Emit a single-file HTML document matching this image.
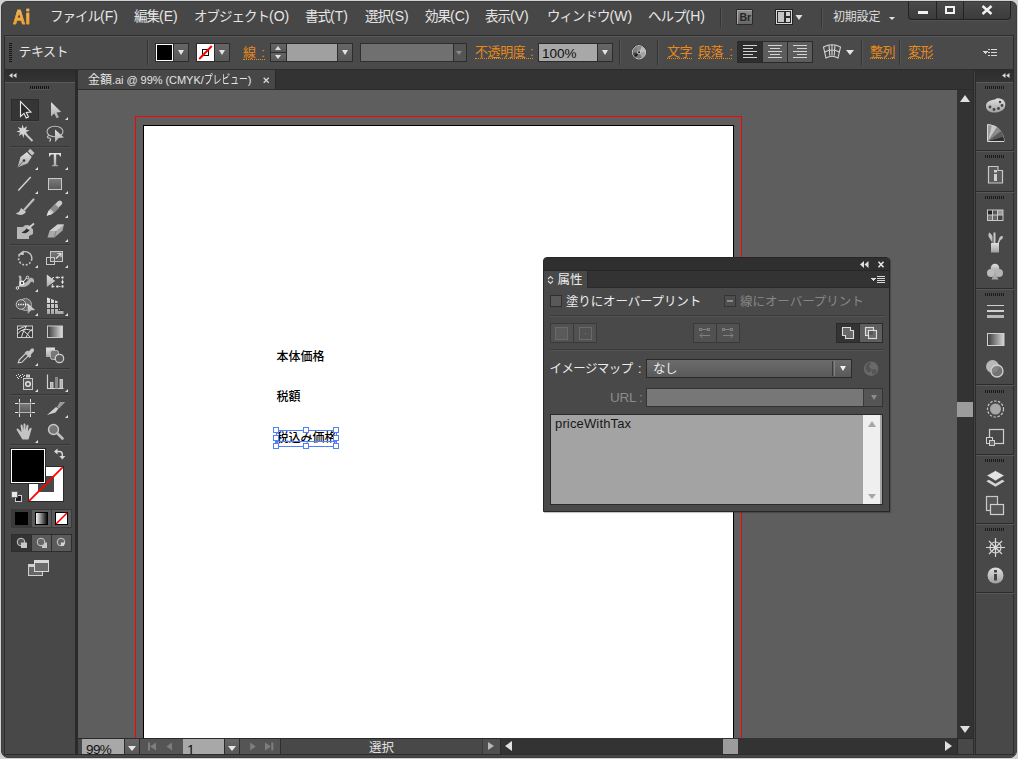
<!DOCTYPE html>
<html lang="ja"><head><meta charset="utf-8"><title>金額.ai</title>
<style>
html,body{margin:0;padding:0;background:#d2d2d2}
body{width:1018px;height:759px;overflow:hidden;background:#d2d2d2;position:relative;
 font-family:"Liberation Sans","Noto Sans CJK JP",sans-serif;font-size:13px;color:#e8e8e8;line-height:1}
.a{position:absolute;box-sizing:border-box}
.t{position:absolute;white-space:nowrap;line-height:16px}
#win{left:1px;top:1px;width:1016px;height:757px;background:#474747;border:1px solid #3e3e3e;border-radius:6px 6px 7px 7px}
.menu{top:7.5px;font-size:13.5px;color:#e6e6e6;letter-spacing:-1px}
.menu .l{font-size:14px;letter-spacing:0}
.or{color:#e8891c;border-bottom:1px dotted #e8891c;line-height:13px;font-size:13px !important;top:45px !important}
.sep{position:absolute;width:1px;background:#333;box-shadow:1px 0 0 #555}
.btn{position:absolute;box-sizing:border-box;background:linear-gradient(#666,#585858);border:1px solid #2c2c2c}
.tri{position:absolute;width:0;height:0;border-left:3.5px solid transparent;border-right:3.5px solid transparent;border-top:5px solid #e4e4e4}
.grip{position:absolute;height:3px;background:repeating-linear-gradient(90deg,#141414 0 1px,transparent 1px 2px);border-bottom:1px solid #555}
.dock{position:absolute;left:977px;width:37px;background:#484848;border-top:1px solid #2c2c2c}
</style></head><body>
<div id="win" class="a"></div>

<!-- ===== MENU BAR ===== -->
<div id="menubar">
<div class="t" style="left:12.800px;top:6px;font-size:21px;font-weight:bold;line-height:22px;color:#f0a232;letter-spacing:.6px;transform:scaleX(.8);transform-origin:0 0;background:linear-gradient(#f2bc66 20%,#f0981c 90%);-webkit-background-clip:text;background-clip:text;-webkit-text-fill-color:transparent;-webkit-text-stroke:.6px #eda73d">Ai</div>
<div class="t menu" style="left:50px">ファイル<span class="l">(F)</span></div>
<div class="t menu" style="left:134px">編集<span class="l">(E)</span></div>
<div class="t menu" style="left:194px">オブジェクト<span class="l">(O)</span></div>
<div class="t menu" style="left:305px">書式<span class="l">(T)</span></div>
<div class="t menu" style="left:365px">選択<span class="l">(S)</span></div>
<div class="t menu" style="left:425px">効果<span class="l">(C)</span></div>
<div class="t menu" style="left:485px">表示<span class="l">(V)</span></div>
<div class="t menu" style="left:547px">ウィンドウ<span class="l">(W)</span></div>
<div class="t menu" style="left:648px">ヘルプ<span class="l">(H)</span></div>
<div class="sep" style="left:720px;top:8px;height:19px"></div>
<div class="a" style="left:736px;top:9px;width:17px;height:16px;background:linear-gradient(#8e8e8e,#666);border:1px solid #2a2a2a;border-radius:1px;box-shadow:inset 1px 1px 0 #a8a8a8"></div>
<div class="t" style="left:739.500px;top:10.500px;font-size:10.500px;line-height:13px;font-weight:bold;color:#262626;letter-spacing:-0.2px">Br</div>
<svg class="a" style="left:774px;top:8px" width="30" height="18" viewBox="0 0 30 18"><rect x="1" y="1" width="18" height="16" fill="#222"/><rect x="2" y="2" width="16" height="14" fill="#d8d8d8"/><rect x="3.500" y="3.500" width="7" height="11" fill="#c4c4c4" stroke="#2a2a2a"/><rect x="11.500" y="3.500" width="5" height="5" fill="#d0d0d0" stroke="#2a2a2a"/><rect x="11.500" y="9.500" width="5" height="5" fill="#d0d0d0" stroke="#2a2a2a"/><path d="M21.500 7h7l-3.500 5z" fill="#e0e0e0"/></svg>
<div class="sep" style="left:821px;top:8px;height:19px"></div>
<div class="t menu" style="left:833px;top:8.500px;font-size:12px;letter-spacing:-0.2px;color:#dedede">初期設定</div>
<div class="tri" style="left:889px;top:17px;border-left-width:3px;border-right-width:3px;border-top-width:3px"></div>
<!-- window buttons -->
<div class="a" style="left:908px;top:1px;width:103px;height:19px;background:linear-gradient(#4a4a4a,#3b3b3b);border:1px solid #222;border-top-color:#3a3a3a;border-radius:0 0 4px 4px;box-shadow:0 1px 0 #525252"></div>
<div class="a" style="left:936px;top:1px;width:1px;height:18px;background:#222"></div>
<div class="a" style="left:963px;top:1px;width:1px;height:18px;background:#222"></div>
<div class="a" style="left:918px;top:11px;width:10px;height:3px;background:#f2f2f2"></div>
<div class="a" style="left:945px;top:6px;width:10px;height:8px;border:2px solid #f2f2f2"></div>
<svg class="a" style="left:981px;top:5px" width="12" height="10" viewBox="0 0 12 10"><path d="M1.500 1l9 8M10.500 1l-9 8" stroke="#f2f2f2" stroke-width="2.400" fill="none"/></svg>
</div>

<!-- ===== CONTROL BAR ===== -->
<div id="ctrl" class="a" style="left:4px;top:35px;width:1010px;height:35px;background:#4a4a4a;border:1px solid #2c2c2c;box-shadow:inset 0 1px 0 #5a5a5a"></div>
<div class="a" style="left:9px;top:43px;width:3px;height:20px;background:repeating-linear-gradient(180deg,#141414 0 1px,transparent 1px 2px)"></div>
<div class="t" style="left:18.500px;top:43.500px;font-size:13px;letter-spacing:-0.5px;color:#e6e6e6">テキスト</div>
<div class="sep" style="left:147px;top:40px;height:25px"></div>
<!-- fill -->
<div class="a" style="left:155px;top:43px;width:19px;height:19px;background:#000;border:1px solid #2a2a2a;box-shadow:inset 0 0 0 1px #fff"></div>
<div class="btn" style="left:173px;top:43px;width:16px;height:19px"></div><div class="tri" style="left:177.500px;top:50px"></div>
<!-- stroke -->
<div class="a" style="left:196px;top:43px;width:19px;height:19px;background:#fff;border:1px solid #2a2a2a"></div>
<svg class="a" style="left:197px;top:44px" width="17" height="17" viewBox="0 0 17 17"><rect x="5.500" y="5.500" width="6" height="6" fill="none" stroke="#111" stroke-width="1"/><path d="M2.200 15L14.800 2" stroke="#f00" stroke-width="2"/></svg>
<div class="btn" style="left:214px;top:43px;width:16px;height:19px"></div><div class="tri" style="left:218.500px;top:50px"></div>
<div class="t or" style="left:243px;top:46px !important;font-size:12.5px">線<span style="margin-left:1.500px"> :</span></div>
<!-- spinner + field -->
<div class="btn" style="left:270px;top:43px;width:17px;height:10px"></div>
<div class="btn" style="left:270px;top:52px;width:17px;height:10px"></div>
<div class="tri" style="left:275px;top:46px;border-top:none;border-bottom:4px solid #dcdcdc;border-left-width:3.500px;border-right-width:3.500px"></div>
<div class="tri" style="left:275px;top:55px;border-top-width:4px;border-left-width:3.500px;border-right-width:3.500px"></div>
<div class="a" style="left:286px;top:43px;width:52px;height:19px;background:#a0a0a0;border:1px solid #2a2a2a"></div>
<div class="btn" style="left:337px;top:43px;width:16px;height:19px"></div><div class="tri" style="left:341.500px;top:50px"></div>
<div class="a" style="left:360px;top:43px;width:94px;height:19px;background:#707070;border:1px solid #2f2f2f"></div>
<div class="btn" style="left:453px;top:43px;width:14px;height:19px;background:#555"></div><div class="tri" style="left:456px;top:51px;border-top-color:#8a8a8a;border-left-width:3.500px;border-right-width:3.500px;border-top-width:4px"></div>
<div class="t or" style="left:475px;top:44px;font-size:12.5px;letter-spacing:-0.4px">不透明度<span style="margin-left:1.500px"> :</span></div>
<div class="a" style="left:538px;top:43px;width:60px;height:19px;background:#a8a8a8;border:1px solid #2a2a2a"></div>
<div class="t" style="left:542px;top:46px;font-size:13.5px;color:#111">100%</div>
<div class="btn" style="left:597px;top:43px;width:16px;height:19px"></div><div class="tri" style="left:601.500px;top:50px"></div>
<div class="sep" style="left:619px;top:40px;height:25px"></div>
<svg class="a" style="left:631px;top:44px" width="16" height="16" viewBox="0 0 16 16"><circle cx="8" cy="8" r="7.300" fill="#2a2a2a"/><circle cx="8" cy="8.300" r="6.600" fill="#9c9c9c" stroke="#d4d4d4" stroke-width="1"/><path d="M8 8.300L5 2.800A6.200 6.200 0 0 1 11 2.800z" fill="#8a8a8a"/><path d="M8 8.300L11 2.800A6.200 6.200 0 0 1 14.200 8.300z" fill="#bdbdbd"/><path d="M8 8.300L14.200 8.300A6.200 6.200 0 0 1 11 13.800z" fill="#a4a4a4"/><path d="M8 8.300L11 13.800A6.200 6.200 0 0 1 5 13.800z" fill="#787878"/><path d="M8 8.300L5 13.800A6.200 6.200 0 0 1 1.800 8.300z" fill="#4a4a4a"/><path d="M8 8.300L1.800 8.300A6.200 6.200 0 0 1 5 2.800z" fill="#7e7e7e"/><path d="M3.500 11.300l2.500-1.800 1 1.300-2.300 2z" fill="#151515"/><circle cx="8" cy="8.300" r="1.900" fill="#c8c8c8"/><circle cx="8" cy="8.300" r="1" fill="#111"/></svg>
<div class="sep" style="left:657px;top:40px;height:25px"></div>
<div class="t or" style="left:667px;top:44px;font-size:12.5px;letter-spacing:-0.5px">文字</div>
<div class="t or" style="left:698px;top:44px;font-size:12.5px;letter-spacing:-0.5px">段落<span style="margin-left:3px"> :</span></div>
<!-- align buttons -->
<div class="a" style="left:737px;top:41px;width:76px;height:22px;background:#5c5c5c;border:1px solid #2a2a2a"></div>
<div class="a" style="left:738px;top:42px;width:24px;height:20px;background:#2e2e2e"></div>
<div class="a" style="left:762px;top:42px;width:1px;height:20px;background:#2a2a2a"></div>
<div class="a" style="left:787px;top:42px;width:1px;height:20px;background:#2a2a2a"></div>
<svg class="a" style="left:738px;top:42px" width="74" height="20" viewBox="0 0 74 20" stroke="#d4d4d4" stroke-width="1" shape-rendering="crispEdges"><path d="M5 3.500h14M5 6.500h10M5 9.500h14M5 12.500h10M5 15.500h14"/><path d="M30 3.500h14M32 6.500h10M30 9.500h14M32 12.500h10M30 15.500h14"/><path d="M55 3.500h14M59 6.500h10M55 9.500h14M59 12.500h10M55 15.500h14"/></svg>
<!-- warp icon -->
<svg class="a" style="left:822px;top:43px" width="20" height="17" viewBox="0 0 20 17" fill="none" stroke="#d4d4d4" stroke-width="1.100"><path d="M1.500 4Q10 -.5 18.500 4L16 15Q10 11.500 4 15Z"/><path d="M7 2L7.800 12.800M13 2L12.200 12.800M10 1.700v10.800M2.600 9Q10 5 17.400 9"/></svg>
<div class="tri" style="left:846px;top:50px;border-top-color:#e6e6e6;border-left-width:4px;border-right-width:4px;border-top-width:5px"></div>
<div class="sep" style="left:861px;top:40px;height:25px"></div>
<div class="t or" style="left:870px;top:44px;font-size:12.5px;letter-spacing:-0.5px">整列</div>
<div class="sep" style="left:899px;top:40px;height:25px"></div>
<div class="t or" style="left:908px;top:44px;font-size:12.5px;letter-spacing:-0.5px">変形</div>
<svg class="a" style="left:982px;top:48px" width="16" height="9" viewBox="0 0 16 9" shape-rendering="crispEdges"><path d="M0 3h6l-3 3z" fill="#d8d8d8"/><path d="M6 1h2v1h-2zM6 4h2v1h-2zM6 7h2v1h-2zM9 1h6v1h-6zM9 4h6v1h-6zM9 7h6v1h-6z" fill="#d8d8d8"/></svg>

<!-- ===== TAB BAR ===== -->
<div id="tabbar" class="a" style="left:77px;top:70px;width:899px;height:20px;background:#333;border-left:1px solid #2a2a2a;border-bottom:1px solid #2c2c2c"></div>
<div class="a" style="left:78px;top:70px;width:198px;height:19px;background:#474747;border-right:1px solid #2a2a2a"></div>
<div class="t" style="left:88px;top:72px;font-size:12px;color:#e4e4e4"><span>金額</span><span style="font-size:11px;letter-spacing:-0.05px">.ai @ 99% (CMYK/</span><span style="display:inline-block;transform:scaleX(.73);transform-origin:0 50%;margin-right:-16px">プレビュー</span><span style="font-size:11px">)</span></div>
<svg class="a" style="left:263px;top:77px" width="7" height="7" viewBox="0 0 7 7"><path d="M.7.700l5 5M5.700.7l-5 5" stroke="#d8d8d8" stroke-width="1.300"/></svg>

<!-- ===== CANVAS ===== -->
<div id="canvas" class="a" style="left:78px;top:90px;width:879px;height:648px;background:#5e5e5e;overflow:hidden">
 <div class="a" style="left:57px;top:26px;width:607px;height:700px;border:1px solid #f00"></div>
 <div class="a" style="left:65px;top:35px;width:591px;height:700px;background:#fff;border:1px solid #000"></div>
 <div class="t" style="left:198.500px;top:259px;font-size:12px;line-height:16px;color:#000;font-weight:500;letter-spacing:0">本体価格</div>
 <div class="t" style="left:198.500px;top:299px;font-size:12px;line-height:16px;color:#000;font-weight:500;letter-spacing:0">税額</div>
 <div class="t" style="left:198.500px;top:340px;font-size:12px;line-height:16px;color:#000;font-weight:500;letter-spacing:0">税込み価格</div>
</div>
<svg class="a" style="left:0;top:0;pointer-events:none" width="1018" height="759" viewBox="0 0 1018 759"><rect x="276.500" y="430.500" width="60" height="16" fill="none" stroke="#4f80ff"/><path d="M276 441.500h60" stroke="#4f80ff"/><rect x="275" y="441" width="3" height="3" fill="#4f80ff"/><rect x="273.5" y="427.5" width="5" height="5" fill="#fff" stroke="#4f80ff"/><rect x="273.5" y="435.5" width="5" height="5" fill="#fff" stroke="#4f80ff"/><rect x="273.5" y="443.5" width="5" height="5" fill="#fff" stroke="#4f80ff"/><rect x="303.5" y="427.5" width="5" height="5" fill="#fff" stroke="#4f80ff"/><rect x="303.5" y="443.5" width="5" height="5" fill="#fff" stroke="#4f80ff"/><rect x="333.5" y="427.5" width="5" height="5" fill="#fff" stroke="#4f80ff"/><rect x="333.5" y="435.5" width="5" height="5" fill="#fff" stroke="#4f80ff"/><rect x="333.5" y="443.5" width="5" height="5" fill="#fff" stroke="#4f80ff"/></svg>

<!-- ===== SCROLLBARS / STATUS ===== -->
<div id="vscroll" class="a" style="left:957px;top:90px;width:16px;height:648px;background:#333"></div>
<div class="tri" style="left:960px;top:95px;border-left-width:5px;border-right-width:5px;border-top:none;border-bottom:7px solid #e0e0e0"></div>
<div class="tri" style="left:960px;top:726px;border-left-width:5px;border-right-width:5px;border-top:7px solid #e0e0e0"></div>
<div class="a" style="left:957px;top:402px;width:16px;height:15px;background:#9c9c9c"></div>
<div class="a" style="left:973px;top:70px;width:3px;height:685px;background:#2c2c2c"></div>
<div class="a" style="left:974px;top:71px;width:1px;height:683px;background:#424242"></div>
<div class="a" style="left:78px;top:754px;width:896px;height:1px;background:#2c2c2c;z-index:3"></div>
<div id="status" class="a" style="left:78px;top:738px;width:895px;height:17px;background:#484848;border-top:1px solid #2a2a2a"></div>
<div class="a" style="left:82px;top:739px;width:42px;height:16px;background:#a8a8a8;overflow:hidden"><div class="t" style="left:4px;top:3px;font-size:13.500px;color:#111;letter-spacing:-0.6px">99%</div></div>
<div class="btn" style="left:124px;top:738px;width:16px;height:17px;border-bottom:none"></div><div class="tri" style="left:128px;top:746px;border-top-color:#e6e6e6;border-left-width:4px;border-right-width:4px;border-top-width:5px"></div>
<div class="a" style="left:140px;top:739px;width:141px;height:16px;background:#555;border-right:1px solid #2e2e2e"></div>
<svg class="a" style="left:146px;top:741px" width="130" height="12" viewBox="0 0 130 12" fill="#7e7e7e"><rect x="2" y="1.500" width="2" height="8"/><path d="M10 1.500v8l-6-4z"/><path d="M26 1.500v8l-5.500-4z"/><path d="M104.200 1.500v8l5.500-4z"/><path d="M119 1.500v8l6-4z"/><rect x="125.300" y="1.500" width="2" height="8"/></svg>
<div class="a" style="left:183px;top:739px;width:41px;height:16px;background:#a8a8a8;overflow:hidden"><div class="t" style="left:4px;top:3px;font-size:14px;color:#111">1</div></div>
<div class="btn" style="left:224px;top:738px;width:16px;height:17px;border-bottom:none"></div><div class="tri" style="left:228px;top:746px;border-top-color:#e6e6e6;border-left-width:4px;border-right-width:4px;border-top-width:5px"></div>
<div class="a" style="left:482px;top:739px;width:18px;height:15px;background:#4f4f4f;border-left:1px solid #3a3a3a"></div>
<div class="t" style="left:369px;top:740px;font-size:12.5px;color:#e0e0e0">選択</div>
<div class="tri" style="left:488px;top:742px;border:none;border-top:4.500px solid transparent;border-bottom:4.500px solid transparent;border-left:6px solid #b8b8b8"></div>
<div class="a" style="left:500px;top:738px;width:457px;height:17px;background:#333;border-left:1px solid #2a2a2a"></div>
<div class="tri" style="left:505px;top:741px;border:none;border-top:5px solid transparent;border-bottom:5px solid transparent;border-right:7px solid #e0e0e0"></div>
<div class="tri" style="left:945px;top:741px;border:none;border-top:5px solid transparent;border-bottom:5px solid transparent;border-left:7px solid #e0e0e0"></div>
<div class="a" style="left:723px;top:739px;width:15px;height:16px;background:#9c9c9c"></div>
<div class="a" style="left:957px;top:738px;width:16px;height:17px;background:#484848;border-left:1px solid #2a2a2a;border-top:1px solid #2a2a2a"></div>

<!-- ===== LEFT TOOLBAR ===== -->
<div id="tools" class="a" style="left:4px;top:70px;width:74px;height:685px;background:#484848;border:1px solid #2c2c2c;border-right-width:3px;border-right-color:#2a2a2a"></div>
<div class="a" style="left:5px;top:70px;width:70px;height:12px;background:linear-gradient(#2c2c2c,#343434)"></div>
<div class="a" style="left:5px;top:82px;width:70px;height:1px;background:#5a5a5a"></div>
<svg class="a" style="left:9px;top:73px" width="8" height="5" viewBox="0 0 8 5"><path d="M3.500 0v5L0 2.500zM7.500 0v5L4 2.500z" fill="#d8d8d8"/></svg>
<div class="grip" style="left:30px;top:86px;width:20px"></div>
<svg class="a" style="left:0;top:0" width="80" height="759" viewBox="0 0 80 759">
<defs><linearGradient id="g1" x1="0" y1="0" x2="0" y2="1"><stop offset="0" stop-color="#e4e4e4"/><stop offset="1" stop-color="#a8a8a8"/></linearGradient><linearGradient id="g2" x1="0" y1="0" x2="0" y2="1"><stop offset="0" stop-color="#7c7c7c"/><stop offset="1" stop-color="#585858"/></linearGradient><linearGradient id="g3" x1="0" y1="0" x2="1" y2="0"><stop offset="0" stop-color="#3a3a3a"/><stop offset="1" stop-color="#e0e0e0"/></linearGradient><linearGradient id="g4" x1="0" y1="0" x2="1" y2="0"><stop offset="0" stop-color="#fff"/><stop offset="1" stop-color="#000"/></linearGradient></defs>
<rect x="11.500" y="99.500" width="27" height="21" fill="#353535" stroke="#2c2c2c"/><path d="M11 121.500h28" stroke="#525252"/>
<path d="M20.500 101.500v15l3.500-3.200 2.200 4.700 2.300-1-2.200-4.600 4.700-.4z" fill="#2a2a2a" stroke="#e8e8e8" stroke-width="1.100" stroke-linejoin="miter"/>
<path d="M51 102v14.500l3.300-3.100 2.300 4.900 2.300-1.100-2.300-4.800 4.600-.4z" fill="url(#g1)"/><path d="M68 117v3h-3z" fill="#e0e0e0"/>
<path d="M22.500 124.500l1.300 3.700 3.400-2-1.400 3.600 3.900.8-3.700 1.400 2 3.400-3.700-1.400-.9 3.900-1.300-3.800-3.400 2 1.500-3.600-3.900-.8 3.700-1.400-2.100-3.400 3.700 1.400z" fill="#d4d4d4"/><path d="M25 133.500l7.500 7.500" stroke="#c8c8c8" stroke-width="2"/>
<ellipse cx="55" cy="131.500" rx="8" ry="5.200" fill="none" stroke="#bcbcbc" stroke-width="1.100"/><path d="M49 135.500c-2 .5-2 2.500 0 2.500s2 2 .5 3.500" fill="none" stroke="#c8c8c8" stroke-width="1.200"/><path d="M55 129.500l9 8-5.200.4-3.800 4.300z" fill="url(#g1)"/>
<path d="M10 146.5h60" stroke="#363636"/><path d="M10 147.5h60" stroke="#515151"/>
<path d="M17.500 167.500l3-10.500 6.500-5 4.800 4.800-4.300 6.700z" fill="url(#g1)"/><path d="M27.800 151.300l2.400-2.500 4.300 4.300-2.400 2.500z" fill="#c4c4c4"/><path d="M27.300 151.800l4.800 4.800" stroke="#555" stroke-width=".8"/><circle cx="24" cy="160.500" r="1.300" fill="#333"/><path d="M17.500 167.500l6-6.500" stroke="#555" stroke-width=".8"/><path d="M38 167v3h-3z" fill="#e0e0e0"/>
<path d="M49 153h12v3.500h-1c-.3-1.500-.8-2-2.500-2h-1.300v9.500c0 1 .5 1.300 2 1.400v.8h-6.400v-.8c1.500-.1 2-.4 2-1.400v-9.500h-1.300c-1.700 0-2.200.5-2.500 2h-1z" fill="url(#g1)"/><path d="M68 167v3h-3z" fill="#e0e0e0"/>
<path d="M18.300 190.500L30.700 177" stroke="#d0d0d0" stroke-width="1.500"/><path d="M38 191v3h-3z" fill="#e0e0e0"/>
<rect x="48.500" y="178.500" width="13" height="11" fill="url(#g2)" stroke="#c8c8c8"/><path d="M68 191v3h-3z" fill="#e0e0e0"/>
<path d="M33.500 199.500l-9 10" stroke="#bcbcbc" stroke-width="2.200" stroke-linecap="round"/><path d="M15.500 213.500c3-.5 4.500-2.500 5.500-5.500l5 3.800c-1.500 3.200-6 4.200-10.500 1.700z" fill="#c8c8c8"/>
<path d="M46.700 215.700l1.800-5 9.500-9.500c1-1 2.500-1 3.500 0s1 2.500 0 3.500l-9.500 9.500z" fill="#c8c8c8"/><path d="M50.500 209l3.800 3.800 4.700-4.700-3.800-3.800z" fill="#8a8a8a"/><path d="M46.700 215.700l1.800-5 3.300 3.300z" fill="#e0e0e0"/><path d="M68 215v3h-3z" fill="#e0e0e0"/>
<path d="M17 227h6c2-2.500 5-2.500 7-1l3 3.500v4.500l-4 2v3H17z" fill="#b8b8b8"/><path d="M21.500 232.500c2-.5 4-2.500 5.500-4.500l2.500 2c-1.500 3-5 4-8 2.500z" fill="#2e2e2e"/><path d="M27.500 229l6.500-5.500" stroke="#d0d0d0" stroke-width="1.800"/>
<path d="M47.500 237.500l2-6.500 8-6.500h6.500l-1.500 6-8 7z" fill="#a8a8a8"/><path d="M49.500 231l8-6.500h6.500l-8 6.500z" fill="#d0d0d0"/><path d="M56 231l-1.500 6.500" stroke="#777" stroke-width=".8"/><path d="M68 239v3h-3z" fill="#e0e0e0"/>
<path d="M10 244.5h60" stroke="#363636"/><path d="M10 245.5h60" stroke="#515151"/>
<path d="M21.41 252.89A6.6 6.6 0 0 1 31.77 258.88" fill="none" stroke="#c4c4c4" stroke-width="1.400"/><path d="M31.77 258.88A6.6 6.6 0 1 1 19.79 254.51" fill="none" stroke="#c4c4c4" stroke-width="1.600" stroke-dasharray="2 1.600"/><path d="M17.800 254.800l5.800-4.300.2 4.600z" fill="#c8c8c8"/><path d="M38 265v3h-3z" fill="#e0e0e0"/>
<rect x="50.500" y="251.500" width="12" height="10" fill="url(#g2)" stroke="#c8c8c8"/><rect x="46.500" y="257.500" width="8" height="7" fill="none" stroke="#c8c8c8"/><path d="M56 258.500l4.500-4.500M57.500 253.500h3.500v3.500" fill="none" stroke="#e0e0e0" stroke-width="1.100"/><path d="M68 265v3h-3z" fill="#e0e0e0"/>
<path d="M18.500 276c2-1.500 3.500 0 3 3l-.5 4c3 1 6-1 7.500-3.500s4.500-2 5.500.5v3.500c-1-2-2.500-2.500-3.500-1-1.500 3-5 5-9 4.500-2.500 0-3-2-2.500-4.500s.5-4.500-.5-6.500z" fill="#b4b4b4"/><path d="M17.500 288l10-11" stroke="#f0f0f0" stroke-width="1"/><circle cx="17.500" cy="288" r="1.300" fill="#484848" stroke="#f0f0f0" stroke-width=".9"/><circle cx="27.500" cy="277.500" r="1.300" fill="#484848" stroke="#f0f0f0" stroke-width=".9"/><circle cx="22" cy="283" r="1.800" fill="#484848" stroke="#f8f8f8" stroke-width="1.200"/><path d="M38 289v3h-3z" fill="#e0e0e0"/>
<rect x="52.500" y="277.500" width="10" height="9" fill="none" stroke="#d0d0d0" stroke-width="1" stroke-dasharray="1.500 1.500"/><path d="M46.800 274.500v12.500l8.500-6z" fill="url(#g1)"/><path d="M51.500 285.500h2v2h-2zM56.500 285.500h2v2h-2zM61.500 285.500h2v2h-2zM61.500 281h2v2h-2zM61.500 276.500h2v2h-2zM56.500 276.500h2v2h-2z" fill="#e8e8e8"/>
<circle cx="25.500" cy="304.500" r="6" fill="#666" stroke="#b0b0b0"/><circle cx="21" cy="304.500" r="4.800" fill="#5a5a5a" stroke="#c8c8c8"/><path d="M18 304.500h10" stroke="#fff" stroke-width="1.400" stroke-dasharray="1.300 1"/><path d="M27.700 303.500l7.500 6.500-4.300.5-3.200 3.500z" fill="url(#g1)"/><path d="M38 313v3h-3z" fill="#e0e0e0"/>
<path d="M47 297.500l11 4v7l5.500 1.500v4H47z" fill="url(#g1)"/><g stroke="#3e3e3e" stroke-width="1" shape-rendering="crispEdges"><path d="M50.500 298.500v15.500M54.500 300v14M47 303.500h11M47 308.500h11"/><path d="M58.500 305v5.500h5M60.500 307v2.500h3" fill="none"/></g><path d="M58 301.500v4h3.500v3h2.500" fill="none" stroke="#484848" stroke-width="1"/><path d="M68 313v3h-3z" fill="#e0e0e0"/>
<path d="M10 318.5h60" stroke="#363636"/><path d="M10 319.5h60" stroke="#515151"/>
<rect x="17.500" y="326" width="15" height="11.500" fill="#3c3c3c" stroke="#c8c8c8"/><path d="M17.500 334c4-5 9-6 15-3M17.500 330c3-2 6-3 9-4M21.500 337.500c1-5 3-8 5-11.500M26 337.500c1-3 3-6 6.500-8.500M22 330.500c3 1 6 3.500 8 7" stroke="#e0e0e0" stroke-width="1" fill="none"/>
<rect x="47.500" y="326" width="15" height="11.500" fill="url(#g3)" stroke="#c8c8c8"/>
<path d="M18.300 362.800l1-3 8.500-8.500 2.500 2.500-8.500 8.500z" fill="none" stroke="#d0d0d0" stroke-width="1.200"/><path d="M25.500 352l5 5" stroke="#c0c0c0" stroke-width="2.600"/><path d="M28.500 353l3-3.500c1-1 2.500 0 1.500 1.500l-3 3.500z" fill="#c8c8c8" stroke="#c8c8c8" stroke-width="1.500"/><path d="M38 363v3h-3z" fill="#e0e0e0"/>
<rect x="46" y="347.500" width="9" height="9.500" fill="url(#g1)"/><rect x="50.500" y="350.500" width="8" height="9" rx="2" fill="#777" stroke="#b8b8b8" stroke-width="1"/><circle cx="59.500" cy="358.500" r="4.200" fill="#5a5a5a" stroke="#d0d0d0" stroke-width="1.200"/>
<path d="M10 368.5h60" stroke="#363636"/><path d="M10 369.5h60" stroke="#515151"/>
<rect x="23.500" y="378.500" width="9" height="11" fill="#555" stroke="#c8c8c8"/><rect x="26" y="374.500" width="4" height="3" fill="#c8c8c8"/><circle cx="28" cy="384" r="2.300" fill="none" stroke="#e0e0e0" stroke-width="1.500"/><path d="M16 375h1v1h-1zM18 374h1v1h-1zM20 375h1v1h-1zM22 374h1v1h-1zM24 375h1v1h-1zM17 377h1v1h-1zM19 376h1v1h-1zM21 377h1v1h-1zM23 376h1v1h-1zM18 378h1v1h-1z" fill="#e0e0e0"/><path d="M38 389v3h-3z" fill="#e0e0e0"/>
<path d="M47.500 374.500v14h16" fill="none" stroke="#d0d0d0" stroke-width="1.200"/><rect x="50.500" y="382.500" width="2.500" height="6" fill="#b0b0b0" stroke="#d8d8d8" stroke-width=".8"/><rect x="55" y="377" width="3" height="11.500" fill="#888"/><rect x="60" y="379.500" width="2.500" height="9" fill="#b0b0b0" stroke="#d8d8d8" stroke-width=".8"/><path d="M68 389v3h-3z" fill="#e0e0e0"/>
<path d="M10 394.5h60" stroke="#363636"/><path d="M10 395.5h60" stroke="#515151"/>
<rect x="19.500" y="403.500" width="11" height="9" fill="url(#g2)" stroke="#b4b4b4"/><path d="M19.500 399v3.500M30.500 399v3.500M19.500 413.500v3.500M30.500 413.500v3.500M15 403.500h3.500M31.500 403.500h3.500M15 412.500h3.500M31.500 412.500h3.500" stroke="#e4e4e4" stroke-width="1"/>
<path d="M47 415l9-8 2.500 1.500-3 4z" fill="#d0d0d0"/><path d="M57 407l3-5h5.300l-6.300 6.500z" fill="#9a9a9a"/><path d="M68 415v3h-3z" fill="#e0e0e0"/>
<path d="M22.500 439.500l-5.500-9c-1-1.500 0-2.500 1.500-1.500l3 3-1-6.500c0-1.300 1.600-1.300 2 0l1 4.500v-5.500c0-1.400 2-1.400 2 0v5.500l1-4.500c.4-1.300 2-1 2 .3l-.7 5.500 2-3c.8-1.200 2.300-.5 1.700 1l-3 10.200z" fill="#c4c4c4"/><path d="M38 440v3h-3z" fill="#e0e0e0"/>
<circle cx="53.500" cy="429.500" r="5" fill="#777" stroke="#c8c8c8" stroke-width="1.400"/><path d="M57.500 433.500l5 5" stroke="#c0c0c0" stroke-width="2.600" stroke-linecap="round"/>
<path d="M10 444.5h60" stroke="#363636"/><path d="M10 445.5h60" stroke="#515151"/>
<rect x="28.500" y="466.500" width="35" height="35" fill="#fff" stroke="#2a2a2a"/><rect x="38" y="476" width="16" height="16" fill="#484848"/><path d="M62.800 467.200L29.200 500.800" stroke="#f00" stroke-width="1.800"/>
<rect x="10.500" y="448.500" width="35" height="35" fill="#fff" stroke="#2a2a2a"/><rect x="12" y="450" width="32" height="32" fill="#000"/>
<path d="M56 451.500h3.500c1.800 0 2.800 1 2.800 2.800v2.500" fill="none" stroke="#d8d8d8" stroke-width="1.400"/><path d="M54 451.500l3.500-3v6zM62.300 459.500l-3-3.500h6z" fill="#d8d8d8"/>
<rect x="15.500" y="495.500" width="6" height="6" fill="#1a1a1a" stroke="#d0d0d0"/><rect x="11.500" y="491.500" width="6" height="6" fill="#e8e8e8" stroke="#666"/>
<rect x="11.500" y="509.500" width="60" height="18" fill="#5a5a5a" stroke="#3a3a3a"/><rect x="12" y="510" width="19.500" height="17" fill="#3a3a3a"/><path d="M31.500 510v17M51.500 510v17" stroke="#3a3a3a"/>
<rect x="15" y="512" width="13" height="13" fill="#000"/><rect x="35.500" y="512.500" width="12" height="12" fill="url(#g4)" stroke="#000"/><rect x="55.500" y="512.500" width="12" height="12" fill="#fff" stroke="#000"/><path d="M67 513L56 524" stroke="#f00" stroke-width="1.600"/>
<rect x="11.500" y="534.500" width="60" height="17" fill="#5a5a5a" stroke="#2e2e2e"/><rect x="12" y="535" width="19.500" height="16" fill="#333"/><path d="M31.500 535v16M51.500 535v16" stroke="#2e2e2e"/>
<circle cx="21" cy="542" r="3.800" fill="#555" stroke="#c8c8c8"/><rect x="21" y="542.500" width="6" height="5.500" fill="#c8c8c8"/>
<rect x="42" y="542.500" width="5" height="5.500" fill="#c8c8c8"/><circle cx="41" cy="542" r="3.800" fill="#666" stroke="#c8c8c8"/>
<circle cx="61" cy="542" r="3.800" fill="#666" stroke="#c8c8c8"/><path d="M61 542.500h4l-1.500 3.500h-2.500z" fill="#d8d8d8"/>
<rect x="28.500" y="564.500" width="14" height="11" fill="#666" stroke="#d0d0d0"/><rect x="29" y="565" width="13" height="2" fill="#d0d0d0"/><rect x="34.500" y="560.500" width="14" height="11" fill="#6a6a6a" stroke="#d8d8d8"/><rect x="35" y="561" width="13" height="2" fill="#d8d8d8"/>
</svg>

<!-- ===== RIGHT DOCK ===== -->
<div id="rdock" class="a" style="left:976px;top:70px;width:38px;height:685px;background:#484848;border-right:1px solid #2c2c2c;border-bottom:1px solid #2c2c2c"></div>
<div class="a" style="left:976px;top:70px;width:37px;height:12px;background:linear-gradient(#2c2c2c,#343434)"></div>
<div class="a" style="left:976px;top:82px;width:37px;height:1px;background:#5a5a5a"></div>
<svg class="a" style="left:1002px;top:73px" width="8" height="5" viewBox="0 0 8 5"><path d="M3.500 0v5L0 2.500zM7.500 0v5L4 2.500z" fill="#d8d8d8"/></svg>
<svg class="a" style="left:0;top:0;pointer-events:none" width="1018" height="759" viewBox="0 0 1018 759">
<defs><linearGradient id="h1" x1="0" y1="0" x2="0" y2="1"><stop offset="0" stop-color="#e0e0e0"/><stop offset="1" stop-color="#a0a0a0"/></linearGradient><linearGradient id="h3" x1="0" y1="0" x2="1" y2="0"><stop offset="0" stop-color="#3a3a3a"/><stop offset="1" stop-color="#d8d8d8"/></linearGradient></defs>
<path d="M985 86v3M987 86v3M989 86v3M991 86v3M993 86v3M995 86v3M997 86v3M999 86v3M1001 86v3M1003 86v3" stroke="#1a1a1a" stroke-width="1" transform="translate(.5 0)"/>
<path d="M986 106c0-4 4-6 9-6.500 1.500-1.500 4-1.500 6.500-.5 3 1.500 4.500 4 3.500 7.500-1 4-6 6-11 6s-8-2.500-8-6.500z" fill="url(#h1)"/><circle cx="990" cy="107" r="1.400" fill="#444"/><circle cx="994" cy="109.500" r="1.400" fill="#444"/><circle cx="998.500" cy="108.500" r="1.400" fill="#444"/><circle cx="1002" cy="105.500" r="1.400" fill="#444"/><circle cx="1000" cy="102" r="1.200" fill="#444"/>
<path d="M987.500 124.500v17h16.500c0-9-7-16.500-16.500-17z" fill="#999" stroke="#d8d8d8" stroke-width="1"/><path d="M988 141l4-16c2 .5 3.500 1 5 2z" fill="#c8c8c8"/><path d="M988 141l9-14c1.500 1 3 2.500 4 4z" fill="#8a8a8a"/><path d="M988 141l13-10c1 1.500 2 3.500 2.500 5.500z" fill="#5a5a5a"/><path d="M988 141l15.500-4.500c.3 1.500.5 3 .5 4.500z" fill="#2e2e2e"/>
<path d="M976 150.5h38" stroke="#2c2c2c"/><path d="M976 151.5h38" stroke="#585858"/>
<path d="M985 155v3M987 155v3M989 155v3M991 155v3M993 155v3M995 155v3M997 155v3M999 155v3M1001 155v3M1003 155v3" stroke="#1a1a1a" stroke-width="1" transform="translate(.5 0)"/>
<path d="M988.500 166.500h9.500v4h4.500v12.500h-14z" fill="#5a5a5a" stroke="#c8c8c8" stroke-width="1.200"/><rect x="994" y="170" width="3" height="2.500" fill="#d0d0d0"/><rect x="994" y="174" width="3" height="7" fill="#d0d0d0"/>
<path d="M976 191.5h38" stroke="#2c2c2c"/><path d="M976 192.5h38" stroke="#585858"/>
<path d="M985 196v3M987 196v3M989 196v3M991 196v3M993 196v3M995 196v3M997 196v3M999 196v3M1001 196v3M1003 196v3" stroke="#1a1a1a" stroke-width="1" transform="translate(.5 0)"/>
<rect x="987" y="209.500" width="16.500" height="11.500" fill="#c8c8c8"/><rect x="988" y="210.500" width="4" height="4" fill="#222"/><rect x="993" y="210.500" width="4" height="4" fill="#555"/><rect x="998" y="210.500" width="4.500" height="4" fill="#999"/><rect x="988" y="215.500" width="4" height="4.500" fill="#777"/><rect x="993" y="215.500" width="4" height="4.500" fill="#666"/><rect x="998" y="215.500" width="4.500" height="4.500" fill="#444"/>
<path d="M991 243h8v9.500h-8z" fill="url(#h1)"/><path d="M994.500 232.500v10.500" stroke="#c8c8c8" stroke-width="2"/><path d="M992.500 243l-3-5c-1.500-1.500-1.500-4 0-5.500 1 1 3 2.500 3 4.500z" fill="#c0c0c0"/><path d="M997.500 243l2-5.500c1-1.500 2.500-2 3.500-1 0 2-1 3-2.500 3.500l-1.500 3z" fill="#c0c0c0"/>
<circle cx="995" cy="268" r="4.300" fill="url(#h1)"/><circle cx="991" cy="273" r="4" fill="#bcbcbc"/><circle cx="999" cy="273" r="4" fill="#b4b4b4"/><path d="M995 272l-3.500 7.500h7z" fill="#a8a8a8"/>
<path d="M976 288.5h38" stroke="#2c2c2c"/><path d="M976 289.5h38" stroke="#585858"/>
<path d="M985 293v3M987 293v3M989 293v3M991 293v3M993 293v3M995 293v3M997 293v3M999 293v3M1001 293v3M1003 293v3" stroke="#1a1a1a" stroke-width="1" transform="translate(.5 0)"/>
<rect x="987" y="305" width="17" height="1" fill="#d0d0d0"/><rect x="987" y="310" width="17" height="2" fill="#d0d0d0"/><rect x="987" y="315" width="17" height="3" fill="#b8b8b8"/>
<rect x="987.500" y="333.500" width="16.500" height="12" fill="url(#h3)" stroke="#d0d0d0"/>
<circle cx="992.500" cy="366.500" r="6.500" fill="#b8b8b8"/><circle cx="997" cy="371" r="6" fill="#7a7a7a" fill-opacity=".85" stroke="#d0d0d0" stroke-width="1.300"/>
<path d="M976 384.5h38" stroke="#2c2c2c"/><path d="M976 385.5h38" stroke="#585858"/>
<path d="M985 390v3M987 390v3M989 390v3M991 390v3M993 390v3M995 390v3M997 390v3M999 390v3M1001 390v3M1003 390v3" stroke="#1a1a1a" stroke-width="1" transform="translate(.5 0)"/>
<circle cx="995.500" cy="409" r="8" fill="none" stroke="#c8c8c8" stroke-width="1.200" stroke-dasharray="2.500 1.500"/><circle cx="995.500" cy="409" r="5.500" fill="#a8a8a8"/>
<rect x="989.500" y="429.500" width="14" height="14" fill="none" stroke="#d0d0d0" stroke-width="1.200"/><rect x="986.500" y="437.500" width="6" height="6" fill="#484848" stroke="#d0d0d0"/><rect x="989.500" y="440.500" width="5" height="5" fill="#666" stroke="#d0d0d0"/>
<path d="M976 454.5h38" stroke="#2c2c2c"/><path d="M976 455.5h38" stroke="#585858"/>
<path d="M985 459v3M987 459v3M989 459v3M991 459v3M993 459v3M995 459v3M997 459v3M999 459v3M1001 459v3M1003 459v3" stroke="#1a1a1a" stroke-width="1" transform="translate(.5 0)"/>
<path d="M986.300 481.300l9.200 5.500 9.200-5.500-2.600-1.500-6.600 3.900-6.600-3.900z" fill="#d4d4d4"/><path d="M995.500 470.500l-9 5 9 5.500 9-5.500z" fill="#e4e4e4" stroke="#484848" stroke-width=".8"/>
<rect x="986.500" y="496.500" width="11" height="14" fill="#555" stroke="#c8c8c8" stroke-width="1.200"/><rect x="990.500" y="504.500" width="13" height="10" fill="#555" stroke="#d0d0d0" stroke-width="1.200"/>
<path d="M976 523.5h38" stroke="#2c2c2c"/><path d="M976 524.5h38" stroke="#585858"/>
<path d="M985 528v3M987 528v3M989 528v3M991 528v3M993 528v3M995 528v3M997 528v3M999 528v3M1001 528v3M1003 528v3" stroke="#1a1a1a" stroke-width="1" transform="translate(.5 0)"/>
<g stroke="#d8d8d8" stroke-width="1.200" fill="none"><circle cx="995.500" cy="547.500" r="5.500"/><path d="M995.500 538v19M986 547.500h19M989 541l13 13M1002 541l-13 13"/></g><circle cx="995.500" cy="547.500" r="2" fill="#d8d8d8"/>
<circle cx="995.500" cy="575.500" r="8" fill="url(#h1)"/><rect x="994" y="570" width="3" height="2.500" fill="#444"/><rect x="994" y="574" width="3" height="6.500" fill="#444"/>
<path d="M976 592.5h38" stroke="#2c2c2c"/><path d="M976 593.5h38" stroke="#585858"/>
</svg>

<!-- ===== ATTRIBUTES PANEL ===== -->
<div id="panel" class="a" style="left:543px;top:257px;width:347px;height:255px;background:#494949;border:1px solid #262626;border-radius:4px 4px 0 0;box-shadow:1px 1px 1px rgba(0,0,0,.25)"></div>
<div class="a" style="left:544px;top:258px;width:345px;height:13px;background:#2f2f2f;border-radius:3px 3px 0 0;border-bottom:1px solid #262626"></div>
<div class="a" style="left:544px;top:271px;width:345px;height:17px;background:#333;border-bottom:1px solid #2a2a2a"></div>
<div class="a" style="left:544px;top:271px;width:44px;height:17px;background:#494949;border-right:1px solid #2a2a2a"></div>
<svg class="a" style="left:547px;top:275px" width="7" height="10" viewBox="0 0 7 10" fill="none" stroke="#dcdcdc" stroke-width="1.100"><path d="M1 4l2.500-2.500L6 4M1 6l2.500 2.500L6 6"/></svg>
<div class="t" style="left:557.500px;top:271.500px;font-size:12.5px;color:#ececec">属性</div>
<svg class="a" style="left:860px;top:261px" width="26" height="8" viewBox="0 0 26 8"><path d="M4 0v7L0 3.500zM8.500 0v7l-4-3.500z" fill="#e0e0e0"/><path d="M18.500.8l5 5.400M23.500.8l-5 5.400" stroke="#e6e6e6" stroke-width="1.600"/></svg>
<svg class="a" style="left:870px;top:275px" width="16" height="9" viewBox="0 0 16 9" shape-rendering="crispEdges"><path d="M0 3h6l-3 3z" fill="#d8d8d8"/><path d="M7 1h8v1h-8zM7 3h8v1h-8zM7 5h8v1h-8zM7 7h8v1h-8z" fill="#d8d8d8"/></svg>
<!-- row 1 -->
<div class="a" style="left:550px;top:295px;width:12px;height:12px;background:#595959;border:1px solid #2e2e2e"></div>
<div class="t" style="left:566px;top:294px;font-size:12.500px;color:#ececec;letter-spacing:-0.15px">塗りにオーバープリント</div>
<div class="a" style="left:724px;top:295px;width:12px;height:12px;background:#4e4e4e;border:1px solid #353535"></div>
<div class="a" style="left:727px;top:300px;width:6px;height:2px;background:#8c8c8c"></div>
<div class="t" style="left:740px;top:294px;font-size:12.500px;color:#868686;letter-spacing:-0.05px">線にオーバープリント</div>
<div class="a" style="left:550px;top:315px;width:334px;height:2px;background:#3a3a3a;border-bottom:1px solid #545454"></div>
<!-- row 2 -->
<div class="a" style="left:550px;top:323px;width:47px;height:20px;background:#515151;border:1px solid #3a3a3a"></div>
<div class="a" style="left:573px;top:324px;width:1px;height:18px;background:#3a3a3a"></div>
<div class="a" style="left:555px;top:327px;width:13px;height:13px;background:#5a5a5a;border:1px solid #6a6a6a"></div>
<div class="a" style="left:579px;top:327px;width:13px;height:13px;border:1px solid #6a6a6a"></div>
<div class="a" style="left:585px;top:333px;width:1px;height:1px;background:#7a7a7a"></div>
<div class="a" style="left:693px;top:323px;width:47px;height:20px;background:#515151;border:1px solid #3a3a3a"></div>
<div class="a" style="left:716px;top:324px;width:1px;height:18px;background:#3a3a3a"></div>
<svg class="a" style="left:694px;top:324px" width="45" height="19" viewBox="0 0 45 19" fill="none" stroke="#808080" stroke-width="1"><rect x="5.500" y="4.500" width="2" height="2"/><rect x="13.500" y="4.500" width="2" height="2"/><path d="M7.500 5.500h6M16 11.500H6M8.500 9l-2.500 2.500L8.500 14"/><rect x="28.500" y="4.500" width="2" height="2"/><rect x="36.500" y="4.500" width="2" height="2"/><path d="M30.500 5.500h6M29 11.500h10M36.500 9l2.500 2.500L36.500 14"/></svg>
<div class="a" style="left:836px;top:323px;width:47px;height:20px;background:#5e5e5e;border:1px solid #2a2a2a"></div>
<div class="a" style="left:837px;top:324px;width:22px;height:18px;background:#343434"></div>
<div class="a" style="left:859px;top:324px;width:1px;height:18px;background:#2a2a2a"></div>
<svg class="a" style="left:837px;top:324px" width="45" height="19" viewBox="0 0 45 19"><path d="M5.500 3.500h8v3h3v8h-8v-3h-3z" fill="#686868" stroke="#dcdcdc" stroke-width="1.100"/><rect x="28.500" y="3.500" width="8" height="8" fill="#7a7a7a" stroke="#dcdcdc" stroke-width="1.100"/><rect x="31.500" y="6.500" width="8" height="8" fill="#6c6c6c" stroke="#dcdcdc" stroke-width="1.100"/><rect x="32" y="7" width="4" height="4" fill="#565656"/><path d="M31.500 11.500v-5h5" fill="none" stroke="#dcdcdc" stroke-width="1.100"/></svg>
<div class="a" style="left:550px;top:349px;width:334px;height:2px;background:#3a3a3a;border-bottom:1px solid #545454"></div>
<!-- row 3 -->
<div class="t" style="left:549.500px;top:361px;font-size:12.500px;color:#ececec;letter-spacing:-0.6px">イメージマップ<span style="letter-spacing:0;margin-left:2px"> :</span></div>
<div class="a" style="left:646px;top:359px;width:206px;height:19px;background:linear-gradient(#6c6c6c,#595959);border:1px solid #2a2a2a"></div>
<div class="t" style="left:653px;top:361px;font-size:12.500px;color:#ececec;letter-spacing:-0.5px">なし</div>
<div class="a" style="left:832px;top:361px;width:3px;height:15px;border-left:1px solid #3a3a3a;border-right:1px solid #808080"></div>
<div class="tri" style="left:839.500px;top:366px;border-top-color:#f0f0f0;border-top-width:5px"></div>
<svg class="a" style="left:863px;top:361px" width="16" height="16" viewBox="0 0 16 16"><circle cx="8.100" cy="7.700" r="7.200" fill="#696969"/><path d="M5.500 1.500c1.500-.3 2.500 0 3 .8-.8 1-2 1.500-2.300 2.700s.8 1.800 1.500 2.300c1 .7 1.200 1.500.6 2.300L6.500 12c-1.500-.5-3.500-2.500-4-4.500S3.500 2.500 5.500 1.500zM9.500 8.500c1.300-.6 3-.3 4 .7.500 1-.5 3-2 3.800s-2.500-.2-2.500-1.500c0-1-.5-2.300.5-3z" fill="#545454"/></svg>
<!-- row 4 -->
<div class="t" style="left:610px;top:390px;font-size:13.500px;color:#8c8c8c;letter-spacing:-0.3px">URL :</div>
<div class="a" style="left:646px;top:388px;width:237px;height:19px;background:#777;border:1px solid #333"></div>
<div class="a" style="left:863px;top:389px;width:19px;height:17px;background:#555;border-left:1px solid #3a3a3a"></div>
<div class="tri" style="left:870.500px;top:395px;border-top-color:#8c8c8c;border-top-width:5px"></div>
<!-- textarea -->
<div class="a" style="left:550px;top:414px;width:333px;height:91px;background:#a3a3a3;border:1px solid #2a2a2a"></div>
<div class="a" style="left:863px;top:415px;width:17px;height:89px;background:#efefef"></div>
<div class="tri" style="left:867.500px;top:421px;border-top:none;border-bottom:6px solid #a6a6a6;border-left-width:4px;border-right-width:4px"></div>
<div class="tri" style="left:867.500px;top:494px;border-top:5px solid #a6a6a6;border-left-width:4px;border-right-width:4px"></div>
<div class="t" style="left:555px;top:416px;font-size:13px;color:#181818;letter-spacing:0.15px">priceWithTax</div>

</body></html>
